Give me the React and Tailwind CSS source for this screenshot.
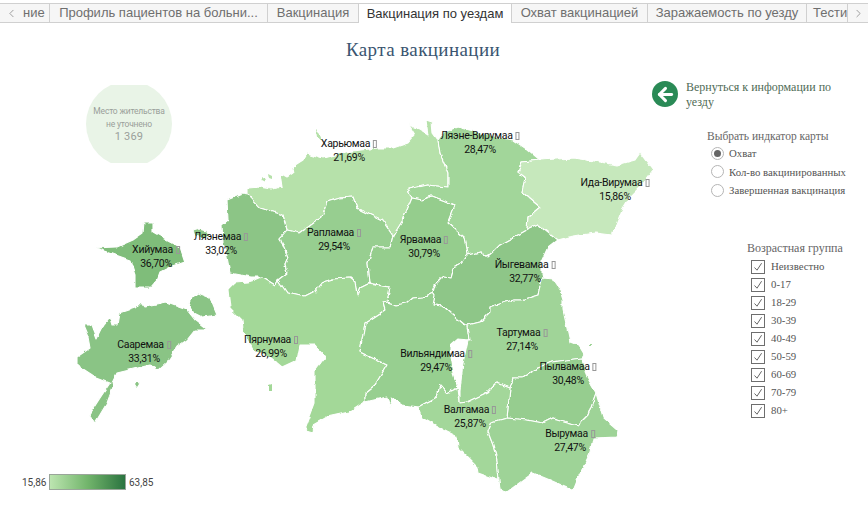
import { ArrowLeft, ChevronLeft, ChevronRight } from 'lucide-react';

const tabs = [
  { label: 'Профиль пациентов на больни...', w: 'w-[218px]' },
  { label: 'Вакцинация', w: 'w-[91px]' },
  { label: 'Вакцинация по уездам', w: 'w-[153px]', active: true },
  { label: 'Охват вакцинацией', w: 'w-[136px]' },
  { label: 'Заражаемость по уезду', w: 'w-[159px]' },
];

const counties = [
  { name: 'Harju', fill: '#b6e1aa', d: 'M248 188 260 187 272 189 282 187 280 173 287 177 293 173 292 167 303 160 307 153 323 158 335 155 345 152 360 150 377 148 393 148 408 143 415 135 408 123 414 128 420 130 428 135 426 120 432 122 433 133 438 140 440 153 448 173 448 187 427 185 408 189 412 198 407 210 403 220 393 236 382 220 357 208 353 197 340 198 327 202 322 217 300 233 287 230 283 215 260 208 248 195Z' },
  { name: 'LaaneViru', fill: '#a2d69a', d: 'M438 140 443 133 457 127 480 133 513 140 528 150 540 160 522 162 518 172 525 177 522 192 540 207 528 217 527 230 500 245 495 250 487 257 480 252 468 255 465 238 448 223 455 205 432 196 422 200 412 198 408 189 427 185 448 187 448 173 440 153Z' },
  { name: 'IdaViru', fill: '#c6e8bc', d: 'M540 160 573 158 600 162 617 165 635 160 640 153 653 170 642 185 630 197 622 210 616 225 612 235 596 233 580 235 568 237 557 240 538 225 527 230 528 217 540 207 522 192 525 177 518 172 522 162Z' },
  { name: 'Laane', fill: '#8cc586', d: 'M248 195 242 194 227 200 228 220 222 225 223 243 227 257 230 273 252 277 262 277 275 285 278 280 287 273 285 265 288 258 280 238 287 230 283 215 260 208Z' },
  { name: 'Rapla', fill: '#97ce90', d: 'M287 230 300 233 322 217 327 202 340 198 353 197 357 208 382 220 393 236 390 247 373 247 368 263 370 283 368 284 360 288 357 295 355 282 350 278 333 279 323 282 315 292 305 297 287 293 278 280 287 273 285 265 288 258 280 238Z' },
  { name: 'Jarva', fill: '#95cd8d', d: 'M393 236 403 220 407 210 412 198 422 200 432 196 455 205 448 223 465 238 468 255 460 265 453 268 450 278 443 277 435 285 433 292 423 297 413 298 407 303 397 305 387 302 390 287 370 283 368 263 373 247 390 247Z' },
  { name: 'Jogeva', fill: '#8ec688', d: 'M527 230 538 225 557 240 548 247 542 260 542 273 543 277 540 287 538 295 522 300 513 300 490 307 490 312 480 322 468 325 465 325 453 315 443 306 433 305 435 295 433 292 435 285 443 277 450 278 453 268 460 265 468 255 480 252 487 257 495 250 500 245Z' },
  { name: 'Parnu', fill: '#a3d898', d: 'M228 290 235 283 248 282 255 280 262 277 275 285 278 280 287 293 305 297 315 292 323 282 333 279 350 278 355 282 357 295 360 288 368 284 390 287 387 302 383 303 385 310 365 323 360 352 387 365 375 385 365 393 365 402 350 412 327 417 313 425 312 432 305 430 315 403 315 370 325 357 315 345 300 345 297 360 282 367 270 357 253 350 243 330 242 320 230 308Z' },
  { name: 'Viljandi', fill: '#97cf90', d: 'M387 302 397 305 407 303 413 298 423 297 433 292 435 295 433 305 443 306 453 315 465 325 468 325 470 340 457 339 450 345 450 357 453 373 458 388 447 393 440 385 437 397 418 407 403 405 392 398 390 408 387 397 365 402 365 393 375 385 387 365 360 352 365 323 385 310 383 303Z' },
  { name: 'Tartu', fill: '#a0d498', d: 'M468 325 480 322 490 312 490 307 513 300 522 300 538 295 540 287 543 277 552 278 560 290 563 300 563 310 570 342 578 345 584 355 582 358 552 362 537 368 523 378 513 378 510 388 497 383 488 392 467 402 460 403 460 390 463 363 468 340 470 340Z' },
  { name: 'Polva', fill: '#96cd8f', d: 'M537 368 552 362 582 358 586 375 596 393 588 415 578 425 553 418 543 423 527 420 507 418 510 388 513 378 523 378Z' },
  { name: 'Valga', fill: '#a3d79a', d: 'M507 418 510 388 497 383 488 392 467 402 460 403 458 388 447 393 440 385 437 397 418 407 422 418 443 430 457 437 458 448 477 467 478 473 498 480 500 490 497 460 493 445 488 432 492 422Z' },
  { name: 'Voru', fill: '#9ed397', d: 'M507 418 527 420 543 423 553 418 578 425 588 415 596 393 603 417 618 430 617 437 593 438 590 453 577 480 573 490 550 480 533 473 507 492 500 490 497 460 493 445 488 432 492 422Z' },
  { name: 'Hiiu', fill: '#7fbd7a', d: 'M95 248 117 247 133 240 143 233 144 222 153 222 153 232 167 240 180 247 185 262 170 267 160 272 157 280 150 288 135 288 135 275 130 260 107 252Z' },
  { name: 'Vormsi', fill: '#8cc586', d: 'M193 231 200 229 207 231 210 236 203 238 195 236Z' },
  { name: 'Saare', fill: '#8ac485', d: 'M83 325 92 325 97 338 102 328 110 318 112 325 118 325 120 313 135 308 141 302 145 307 167 303 187 310 195 320 208 330 195 330 187 340 177 347 167 362 158 370 150 365 117 373 112 383 113 387 107 403 95 423 89 415 100 398 110 383 97 378 77 365 77 357 90 348 88 337Z' },
  { name: 'Muhu', fill: '#8ac485', d: 'M188 302 197 293 210 298 217 315 203 317 193 312Z' },
];

// small islands without a label
const islets = [
  { fill: '#b6e1aa', d: 'M316 130 322 136 321 140 317 137Z' },
  { fill: '#b6e1aa', d: 'M261 176 265 178 266 182 262 180Z' },
  { fill: '#b6e1aa', d: 'M268 173 272 175 272 179 269 178Z' },
  { fill: '#a3d898', d: 'M269 385 272 384 272 391 269 392Z' },
  { fill: '#8ac485', d: 'M135 385 137 382 139 385 137 388Z' },
  { fill: '#a0d498', d: 'M589 344 592 344 592 347 589 347Z' },
];

const labels = [
  { name: 'Харьюмаа', value: '21,69%', x: 349, y: 143 },
  { name: 'Ляэне-Вирумаа', value: '28,47%', x: 480, y: 135 },
  { name: 'Ида-Вирумаа', value: '15,86%', x: 615, y: 182 },
  { name: 'Ляэнемаа', value: '33,02%', x: 221, y: 236 },
  { name: 'Хийумаа', value: '36,70%', x: 156, y: 249 },
  { name: 'Рапламаа', value: '29,54%', x: 334, y: 232 },
  { name: 'Ярвамаа', value: '30,79%', x: 424, y: 239 },
  { name: 'Йыгевамаа', value: '32,77%', x: 525, y: 264 },
  { name: 'Сааремаа', value: '33,31%', x: 144, y: 344 },
  { name: 'Пярнумаа', value: '26,99%', x: 271, y: 339 },
  { name: 'Вильяндимаа', value: '29,47%', x: 436, y: 353 },
  { name: 'Тартумаа', value: '27,14%', x: 522, y: 332 },
  { name: 'Пылвамаа', value: '30,48%', x: 568, y: 366 },
  { name: 'Валгамаа', value: '25,87%', x: 470, y: 409 },
  { name: 'Вырумаа', value: '27,47%', x: 570, y: 433 },
];

const radios = ['Охват', 'Кол-во вакцинированных', 'Завершенная вакцинация'];
const ages = ['Неизвестно', '0-17', '18-29', '30-39', '40-49', '50-59', '60-69', '70-79', '80+'];

function CountyLabel({ name, value, x, y }) {
  return (
    <div
      className="absolute -translate-x-1/2 text-center whitespace-nowrap font-['Roboto',sans-serif] text-[10.5px] tracking-[-0.3px] leading-[14px] text-[#111111]"
      style={{ left: x, top: y - 76 }}
    >
      <div className="flex items-center justify-center gap-[3px]">
        {name}
        <span className="inline-block w-[4px] h-[8px] border border-[#989898]"></span>
      </div>
      <div>{value}</div>
    </div>
  );
}

export default function App() {
  return (
    <div className="w-[868px] h-[510px] overflow-hidden bg-white">
      {/* tab strip */}
      <div className="flex h-[20px] mt-[3px] font-['Liberation_Sans',sans-serif] text-[13px] text-[#6f6f6f]">
        <div className="flex items-center justify-center w-[22px] bg-[#f6f6f6] border-y border-[#d0d0d0]">
          <ChevronLeft size={13} strokeWidth={1.2} />
        </div>
        <div className="flex items-center w-[28px] pl-px bg-[#f6f6f6] border-y border-r border-[#d0d0d0]">ние</div>
        {tabs.map(t => (
          <div
            key={t.label}
            className={t.active
              ? `${t.w} flex items-center justify-center border-t border-r border-[#d0d0d0] bg-white text-[#333333]`
              : `${t.w} flex items-center justify-center border-y border-r border-[#d0d0d0] bg-[#f6f6f6]`}
          >
            {t.label}
          </div>
        ))}
        <div className="w-[40px] flex items-center pl-[6px] overflow-hidden bg-[#f6f6f6] border-y border-[#d0d0d0]">Тести</div>
        <div className="flex-1 flex items-center justify-center bg-[#f6f6f6] border-y border-l border-[#d0d0d0]">
          <ChevronRight size={13} strokeWidth={1.2} />
        </div>
      </div>

      <h1 className="h-[47px] pt-[15px] pr-[22px] text-center font-['Liberation_Serif',serif] text-[19px] leading-[24px] font-normal tracking-[0.4px] text-[#3a5570]">
        Карта вакцинации
      </h1>

      <div className="flex">
        {/* map */}
        <div className="relative w-[652px] h-[440px] shrink-0">
          <svg className="absolute left-0 top-0 overflow-visible" width="652" height="440" viewBox="0 70 652 440">
            <defs>
              <filter id="rough" x="0" y="0" width="100%" height="100%" filterUnits="objectBoundingBox">
                <feTurbulence type="fractalNoise" baseFrequency="0.11" numOctaves="3" seed="4" result="n" />
                <feDisplacementMap in="SourceGraphic" in2="n" scale="4.5" xChannelSelector="R" yChannelSelector="G" />
                <feGaussianBlur stdDeviation="0.35" />
              </filter>
            </defs>
            <g filter="url(#rough)">
              {counties.map(c => (
                <path key={c.name} d={c.d} fill={c.fill} stroke="#ffffff" strokeWidth="1.1" strokeLinejoin="round" />
              ))}
              {islets.map(c => (
                <path key={c.d} d={c.d} fill={c.fill} />
              ))}
            </g>
          </svg>

          <div className="absolute left-[86px] top-[15px] w-[86px] h-[78px] overflow-hidden">
            <div className="absolute left-0 top-[-4px] w-[86px] h-[86px] rounded-full bg-[#e9f4e7]"></div>
            <div className="relative pt-[20px] text-center font-['Roboto',sans-serif] text-[8.5px] tracking-[-0.2px] leading-[12.5px] text-[#9a9f9a]">
              <div>Место жительства</div>
              <div>не уточнено</div>
              <div className="text-[11px] leading-[14px] tracking-[0.2px]">1 369</div>
            </div>
          </div>

          {labels.map(l => <CountyLabel key={l.name} {...l} />)}

          <div className="absolute left-[22px] top-[404px] flex items-center gap-[3px] font-['Roboto',sans-serif] text-[10px] text-[#444444]">
            <span className="w-[24px]">15,86</span>
            <div className="w-[77px] h-[16px] border border-[#9aa59a] bg-linear-to-r from-[#bce5b0] via-[#72b56c] to-[#2a7440]"></div>
            <span>63,85</span>
          </div>
        </div>

        {/* filters */}
        <div className="w-[216px] font-['Liberation_Serif',serif] text-[#555555]">
          <div className="flex gap-[8px] pt-[11px]">
            <div className="flex items-center justify-center w-[26px] h-[26px] rounded-full bg-[#2a8a56] shrink-0">
              <ArrowLeft size={21} color="#ffffff" strokeWidth={3.4} />
            </div>
            <div className="w-[150px] -mt-[1px] text-[12px] leading-[15px] text-[#4f6b55]">Вернуться к информации по уезду</div>
          </div>

          <div className="pl-[55px] pt-[19px] text-[11.5px] leading-[14px] text-[#666666]">Выбрать индкатор карты</div>
          <div className="pl-[59px] pt-[1px]">
            {radios.map((r, i) => (
              <div key={r} className="flex items-center gap-[5px] h-[18.5px] text-[10.8px] text-[#555555]">
                <span className="flex items-center justify-center w-[13px] h-[13px] rounded-full border border-[#b5b5b5] shrink-0">
                  {i === 0 && <span className="w-[7px] h-[7px] rounded-full bg-[#666666]"></span>}
                </span>
                {r}
              </div>
            ))}
          </div>

          <div className="pl-[95px] pt-[41px] text-[12px] leading-[14px] text-[#666666]">Возрастная группа</div>
          <div className="pl-[99px] pt-[3px]">
            {ages.map(a => (
              <div key={a} className="flex items-center gap-[6px] h-[18px] text-[10.8px] text-[#555555]">
                <span className="flex items-center justify-center w-[14px] h-[14px] border border-[#6e6e6e] shrink-0">
                  <svg width="10" height="10" viewBox="0 0 10 10" fill="none">
                    <path d="M1.5 5.5 4 8.2 8.6 1.2" stroke="#666666" strokeWidth="1" />
                  </svg>
                </span>
                {a}
              </div>
            ))}
          </div>
        </div>
      </div>
    </div>
  );
}
